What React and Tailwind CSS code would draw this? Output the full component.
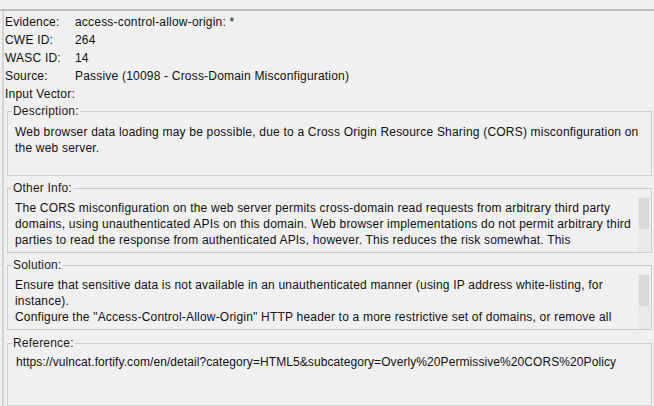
const rows = [
  ['Evidence:', 'access-control-allow-origin: *'],
  ['CWE ID:', '264'],
  ['WASC ID:', '14'],
  ['Source:', 'Passive (10098 - Cross-Domain Misconfiguration)'],
  ['Input Vector:', ''],
];

function Box({ title, h, pt, scroll, thumbTop, children }) {
  return (
    <fieldset className={`ml-[3px] w-[645px] ${h} border border-[#cdcdcd] flex flex-col`}>
      <legend className="ml-[4px] px-[1px] leading-[14px] text-[12px] text-[#1a1a1a]">{title}</legend>
      <div className={`flex flex-1 min-h-0 ${pt}`}>
        <div className="flex-1 pl-[7px] pr-[4px] leading-[16px] text-[12px] text-[#111] overflow-hidden">
          {children}
        </div>
        {scroll && (
          <div className={`w-[12px] mr-[1px] bg-[#e9e9e9] ${thumbTop} flex flex-col`}>
            <div className="mx-[1px] h-[31px] bg-[#dadada]" />
          </div>
        )}
      </div>
    </fieldset>
  );
}

export default function App() {
  return (
    <div className="w-[654px] h-[406px] bg-[#f0f0f0] overflow-hidden pt-[9px] tracking-[0.2px]" style={{ fontFamily: '"Liberation Sans", Arial, sans-serif' }}>
      <div className="border-t-2 border-[#c0c0c0] h-full">
        <div className="ml-[2px] border-l-2 border-[#d4d4d4] h-full pt-[2px]">
          {rows.map(([k, v]) => (
            <div key={k} className="flex h-[18px] items-center pl-[1px] text-[12px] text-[#111]">
              <span className="w-[70px] shrink-0">{k}</span>
              <span>{v}</span>
            </div>
          ))}
          <div className="mt-[1px]">
            <Box title="Description:" h="h-[72px]" pt="pt-[6px]">
              Web browser data loading may be possible, due to a Cross Origin Resource Sharing (CORS) misconfiguration on the web server.
            </Box>
          </div>
          <div className="mt-[5px]">
            <Box title="Other Info:" h="h-[72px]" pt="pt-[5px]" scroll thumbTop="pt-[1px] mt-[-3px]">
              The CORS misconfiguration on the web server permits cross-domain read requests from arbitrary third party domains, using unauthenticated APIs on this domain. Web browser implementations do not permit arbitrary third parties to read the response from authenticated APIs, however. This reduces the risk somewhat. This
            </Box>
          </div>
          <div className="mt-[5px]">
            <Box title="Solution:" h="h-[72px]" pt="pt-[5px]" scroll thumbTop="pt-[1px] mt-[-3px]">
              <div>Ensure that sensitive data is not available in an unauthenticated manner (using IP address white-listing, for instance).</div>
              <div>Configure the "Access-Control-Allow-Origin" HTTP header to a more restrictive set of domains, or remove all</div>
            </Box>
          </div>
          <div className="mt-[6px]">
            <Box title="Reference:" h="h-[70px]" pt="pt-[4px]">
              <span className="pl-[1px] tracking-[0.08px]">https://vulncat.fortify.com/en/detail?category=HTML5&amp;subcategory=Overly%20Permissive%20CORS%20Policy</span>
            </Box>
          </div>
        </div>
      </div>
    </div>
  );
}
